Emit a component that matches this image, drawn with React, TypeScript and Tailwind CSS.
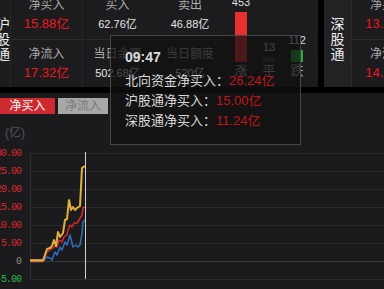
import React from "react";

const yellow = [
  [30, 260.5], [43, 260.5], [47, 249], [50, 248], [52, 246], [54, 240], [56, 246], [58, 232], [60, 237],
  [63, 233], [65, 220], [67, 219], [69, 200], [71, 210], [73, 207], [75, 210], [77, 208], [80, 206],
  [82, 168], [85, 166],
];
const red = [
  [30, 261.5], [43, 261.5], [47, 252], [50, 250], [53, 248], [55, 246], [57, 247], [59, 240], [62, 242],
  [64, 237], [67, 235], [68, 230], [70, 225], [72, 227], [74, 223], [77, 223], [79, 220], [82, 215],
  [83, 208], [85, 207],
];
const blue = [
  [30, 261.5], [43, 261.5], [47, 257], [50, 258], [52, 260], [55, 252], [57, 255], [60, 247], [62, 250],
  [65, 242], [67, 245], [70, 235], [72, 243], [73, 247], [76, 245], [78, 247], [80, 245], [82, 233],
  [83, 222], [85, 220],
];

const pts = (a: number[][]) => a.map((p) => p.join(",")).join(" ");

const axis = [
  { v: "30.00", c: "text-[#d9272e]" },
  { v: "25.00", c: "text-[#d9272e]" },
  { v: "20.00", c: "text-[#d9272e]" },
  { v: "15.00", c: "text-[#d9272e]" },
  { v: "10.00", c: "text-[#d9272e]" },
  { v: "5.00", c: "text-[#d9272e]" },
  { v: "0", c: "text-[#8a8a8a]" },
  { v: "-5.00", c: "text-[#2bb84a]" },
];

function VLabel({ text }: { text: string }) {
  return (
    <div className="flex w-[14px] shrink-0 flex-col pt-[26px] text-[14px] leading-[15px] text-[#eeeeee]">
      {text.split("").map((c) => (
        <span key={c}>{c}</span>
      ))}
    </div>
  );
}

function Cell({ label, value, w, red }: { label: string; value: string; w: string; red?: boolean }) {
  return (
    <div className={`flex ${w} shrink-0 flex-col items-center pt-[7px] whitespace-nowrap`}>
      <span className="text-[12px] leading-[14px] text-[#ababab]">{label}</span>
      <span
        className={
          red
            ? "mt-[3px] text-[13px] leading-[18px] text-[#f0161e]"
            : "mt-[3px] text-[11px] leading-[18px] text-[#e6e6e6]"
        }
      >
        {value}
      </span>
    </div>
  );
}

function Bar({ n, h, color, label }: { n: string; h: string; color: string; label: string }) {
  return (
    <div className="flex w-[12px] flex-col items-center">
      <span className="mb-[4px] text-[11px] leading-[12px] text-[#dddddd]">{n}</span>
      <div className={`w-[12px] ${h} ${color}`} />
      <span className="mt-[1px] whitespace-nowrap text-[13px] leading-[15px] text-[#b0b0b0]">{label}</span>
    </div>
  );
}

export default function App() {
  return (
    <div className="relative h-[289px] w-[384px] overflow-hidden bg-black font-['Liberation_Sans','Noto_Sans_CJK_SC',sans-serif]">
      {/* summary strip (scrolled slightly) */}
      <div className="-mt-[9px] flex h-[96px] gap-[6px]">
        <div className="flex w-[318px] shrink-0 bg-[#1c1c1e]">
          <div className="-ml-[3px] flex w-[14px] shrink-0 justify-end overflow-hidden border-r border-[#262628]">
            <VLabel text="沪股通" />
          </div>
          <div className="flex flex-col">
            <div className="flex h-[49px] border-b border-[#2b2b2d]">
              <Cell label="净买入" value="15.88亿" w="w-[71px]" red />
              <div className="w-px bg-[#262628]" />
              <Cell label="买入" value="62.76亿" w="w-[69px]" />
              <Cell label="卖出" value="46.88亿" w="w-[76px]" />
            </div>
            <div className="flex h-[47px]">
              <Cell label="净流入" value="17.32亿" w="w-[71px]" red />
              <div className="w-px bg-[#262628]" />
              <Cell label="当日余额" value="502.68亿" w="w-[69px]" />
              <Cell label="当日额度" value="520亿" w="w-[76px]" />
            </div>
          </div>
          <div className="flex flex-1 items-end gap-[16px] pb-[9px] pl-[7px]">
            <Bar n="453" h="h-[50px]" color="bg-[#e83030]" label="涨" />
            <Bar n="13" h="h-[5px]" color="bg-[#3a3a3c]" label="平" />
            <Bar n="112" h="h-[12px]" color="bg-[#2aa838]" label="跌" />
          </div>
        </div>
        <div className="flex flex-1 bg-[#1c1c1e]">
          <div className="flex w-[28px] shrink-0 justify-center border-r border-[#2b2b2d] bg-[#222224]">
            <VLabel text="深股通" />
          </div>
          <div className="flex flex-col">
            <div className="flex h-[49px] border-b border-[#2b2b2d]">
              <Cell label="净买入" value="13.26亿" w="w-[72px]" red />
            </div>
            <div className="flex h-[47px]">
              <Cell label="净流入" value="14.05亿" w="w-[72px]" red />
            </div>
          </div>
        </div>
      </div>

      {/* chart panel */}
      <div className="mt-[6px] h-[196px] bg-[#1b1b1e] pt-[5px]">
        <div className="flex h-[16px] gap-[3px] text-[12px] leading-[16px]">
          <div className="w-[55px] bg-[#cc2a2f] text-center text-white">净买入</div>
          <div className="w-[50px] bg-[#a8a8a8] text-center text-[#7a7a7a]">净流入</div>
        </div>
        <div className="mt-[12px] pl-[5px] text-[12px] leading-[14px] text-[#555555]">(亿)</div>
        <div className="mt-[4px] flex">
          <div className="-ml-[8px] flex w-[30px] shrink-0 flex-col pr-[1px] font-['Liberation_Mono',monospace] text-[10px] tracking-[-1px]">
            {axis.map((a) => (
              <div key={a.v} className={`flex h-[18px] items-center justify-end whitespace-nowrap ${a.c}`}>
                {a.v}
              </div>
            ))}
          </div>
          <svg width="354" height="145" viewBox="30 144 354 145" className="ml-[8px] shrink-0">
            {[153, 171, 189, 207, 225, 243, 279].map((y) => (
              <line key={y} x1="30" x2="384" y1={y + 0.5} y2={y + 0.5} stroke="#2a2a2d" />
            ))}
            <line x1="30" x2="384" y1="261.5" y2="261.5" stroke="#38383a" />
            <line x1="30.5" x2="30.5" y1="153" y2="280" stroke="#2e2e31" />
            <polyline points="30,259.5 43,259.5" fill="none" stroke="#777777" strokeWidth="1" />
            <polyline points={pts(blue)} fill="none" stroke="#2f6fc0" strokeWidth="1.5" strokeLinejoin="round" />
            <polyline points={pts(red)} fill="none" stroke="#d42a30" strokeWidth="1.5" strokeLinejoin="round" />
            <polyline points={pts(yellow)} fill="none" stroke="#e2b13c" strokeWidth="2" strokeLinejoin="round" />
            <line x1="85.5" x2="85.5" y1="152" y2="279" stroke="#cfcfcf" />
          </svg>
        </div>
      </div>

      {/* tooltip */}
      <div className="absolute left-[110px] top-[35px] h-[110px] w-[191px] border border-[#474747] bg-[rgba(17,17,17,0.73)] pl-[14px] pt-[13px] whitespace-nowrap">
        <div className="text-[14px] font-bold leading-[16px] text-[#dddddd]">09:47</div>
        <div className="mt-[6px] text-[13px] leading-[20px]">
          <div>
            <span className="text-[#d8d8d8]">北向资金净买入：</span>
            <span className="text-[#c0151b]">26.24亿</span>
          </div>
          <div>
            <span className="text-[#d8d8d8]">沪股通净买入：</span>
            <span className="text-[#c0151b]">15.00亿</span>
          </div>
          <div>
            <span className="text-[#d8d8d8]">深股通净买入：</span>
            <span className="text-[#c0151b]">11.24亿</span>
          </div>
        </div>
      </div>
    </div>
  );
}
